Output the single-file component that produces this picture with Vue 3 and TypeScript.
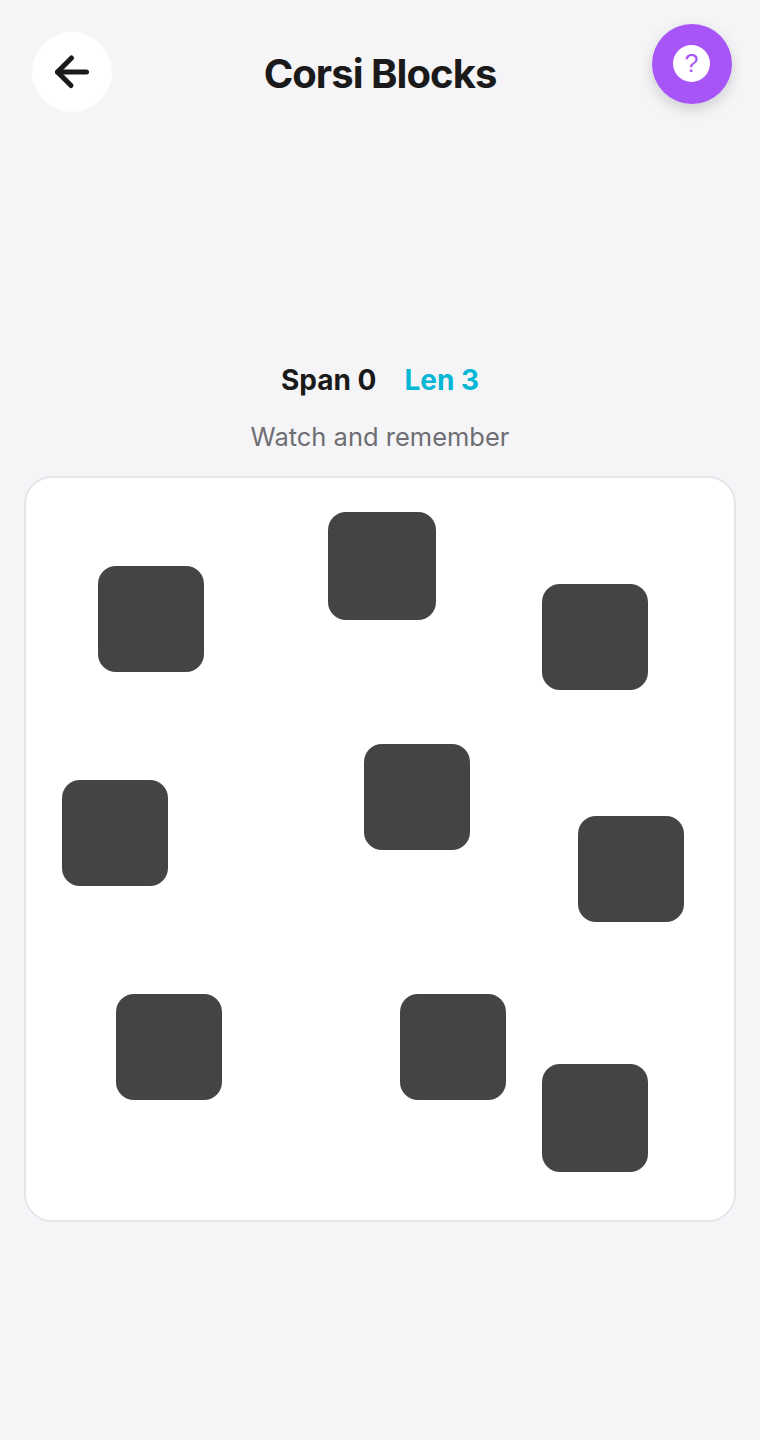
<script setup lang="ts">
interface Block { x: number; y: number; w: number; h: number }
const blocks: Block[] = [
  { x: 72, y: 88, w: 106, h: 106 },
  { x: 302, y: 34, w: 108, h: 108 },
  { x: 516, y: 106, w: 106, h: 106 },
  { x: 36, y: 302, w: 106, h: 106 },
  { x: 338, y: 266, w: 106, h: 106 },
  { x: 552, y: 338, w: 106, h: 106 },
  { x: 90, y: 516, w: 106, h: 106 },
  { x: 374, y: 516, w: 106, h: 106 },
  { x: 516, y: 586, w: 106, h: 108 },
]
</script>

<template>
  <div class="page">
    <header class="header">
      <button class="back" aria-label="Back">
        <svg width="40" height="40" viewBox="0 0 40 40" fill="none" stroke="#1a1a1a" stroke-width="5" stroke-linecap="round" stroke-linejoin="round">
          <path d="M34.5 20H5.5" />
          <path d="M19.5 6 5.5 20l13.5 13.5" />
        </svg>
      </button>
      <h1 class="title">Corsi Blocks</h1>
      <button class="help" aria-label="Help">
        <span class="help-inner">?</span>
      </button>
    </header>
    <div class="stats">
      <span class="span">Span 0</span>
      <span class="len">Len 3</span>
    </div>
    <p class="hint">Watch and remember</p>
    <main class="board">
      <div
        v-for="(b, i) in blocks"
        :key="i"
        class="block"
        :style="{ left: b.x + 'px', top: b.y + 'px', width: b.w + 'px', height: b.h + 'px' }"
      ></div>
    </main>
  </div>
</template>

<style>
html, body { margin: 0; background: #f5f5f7; }
</style>

<style scoped>
.page {
  width: 760px;
  height: 1440px;
  box-sizing: border-box;
  padding: 24px 24px 0;
  background: #f5f5f7;
  font-family: Inter, "Liberation Sans", sans-serif;
  overflow: hidden;
}
.header {
  display: grid;
  grid-template-columns: 1fr auto 1fr;
  align-items: start;
  height: 88px;
}
.back {
  justify-self: start;
  width: 80px;
  height: 80px;
  margin: 8px 0 0 8px;
  border: none;
  border-radius: 50%;
  background: #fff;
  padding: 0;
  display: flex;
  align-items: center;
  justify-content: center;
}
.title {
  margin: 26px 0 0;
  font-size: 40px;
  line-height: 48px;
  font-weight: 700;
  letter-spacing: -0.95px;
  color: #1a1a1a;
}
.help {
  justify-self: end;
  width: 80px;
  height: 80px;
  margin-right: 4px;
  border: none;
  border-radius: 50%;
  background: #a855f7;
  box-shadow: 0 5px 14px rgba(0, 0, 0, 0.16);
  padding: 0;
  display: flex;
  align-items: center;
  justify-content: center;
}
.help-inner {
  width: 37px;
  height: 37px;
  margin: -1px 1px 0 0;
  border-radius: 50%;
  background: #fff;
  color: #a855f7;
  font-size: 25px;
  line-height: 37px;
  font-weight: 100;
  text-align: center;
}
.stats {
  margin-top: 248px;
  display: flex;
  justify-content: center;
  gap: 28px;
  font-size: 28px;
  line-height: 40px;
  font-weight: 700;
}
.span { color: #1a1a1a; }
.len { color: #06b6d4; }
.hint {
  margin: 17px 0 0;
  text-align: center;
  font-size: 25.5px;
  line-height: 40px;
  color: #6e6e73;
}
.board {
  position: relative;
  margin-top: 19px;
  height: 746px;
  box-sizing: border-box;
  background: #fff;
  border: 2px solid #e5e5ea;
  border-radius: 28px;
}
.block {
  position: absolute;
  background: #444;
  border-radius: 18px;
}
</style>
